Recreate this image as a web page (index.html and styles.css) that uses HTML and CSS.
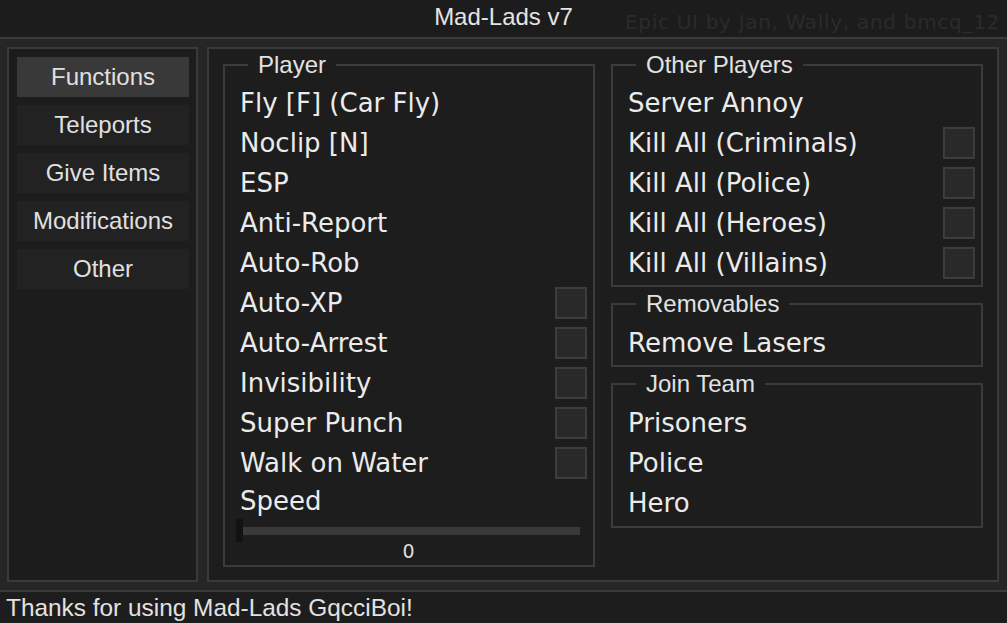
FILE: index.html
```html
<!DOCTYPE html>
<html>
<head>
<meta charset="utf-8">
<link rel="stylesheet" href="styles.css">
</head>
<body>
<div class="window">
  <header class="titlebar">
    <div></div>
    <div class="title">Mad-Lads v7</div>
    <div class="watermark">Epic UI by Jan, Wally, and bmcq_12</div>
  </header>
  <main class="main">
    <nav class="sidebar">
      <div class="tab active">Functions</div>
      <div class="tab">Teleports</div>
      <div class="tab">Give Items</div>
      <div class="tab">Modifications</div>
      <div class="tab">Other</div>
    </nav>
    <section class="content">
      <div class="col">
        <fieldset class="group player">
          <legend>Player</legend>
          <div class="row"><span>Fly [F] (Car Fly)</span></div>
          <div class="row"><span>Noclip [N]</span></div>
          <div class="row"><span>ESP</span></div>
          <div class="row"><span>Anti-Report</span></div>
          <div class="row"><span>Auto-Rob</span></div>
          <div class="row"><span>Auto-XP</span><span class="check"></span></div>
          <div class="row"><span>Auto-Arrest</span><span class="check"></span></div>
          <div class="row"><span>Invisibility</span><span class="check"></span></div>
          <div class="row"><span>Super Punch</span><span class="check"></span></div>
          <div class="row"><span>Walk on Water</span><span class="check"></span></div>
          <div class="speed-label">Speed</div>
          <div class="slider"><div class="track"></div><div class="thumb"></div></div>
          <div class="value">0</div>
        </fieldset>
      </div>
      <div class="col right">
        <fieldset class="group others">
          <legend>Other Players</legend>
          <div class="row"><span>Server Annoy</span></div>
          <div class="row"><span>Kill All (Criminals)</span><span class="check"></span></div>
          <div class="row"><span>Kill All (Police)</span><span class="check"></span></div>
          <div class="row"><span>Kill All (Heroes)</span><span class="check"></span></div>
          <div class="row"><span>Kill All (Villains)</span><span class="check"></span></div>
        </fieldset>
        <fieldset class="group removables">
          <legend>Removables</legend>
          <div class="row"><span>Remove Lasers</span></div>
        </fieldset>
        <fieldset class="group team">
          <legend>Join Team</legend>
          <div class="row"><span>Prisoners</span></div>
          <div class="row"><span>Police</span></div>
          <div class="row"><span>Hero</span></div>
        </fieldset>
      </div>
    </section>
  </main>
  <footer class="status">Thanks for using Mad-Lads GqcciBoi!</footer>
</div>
</body>
</html>
```
FILE: styles.css
```css
* { box-sizing: border-box; }
html, body { margin: 0; padding: 0; }
body {
  width: 1007px;
  height: 623px;
  overflow: hidden;
  background: #262626;
  font-family: "Liberation Sans", Arial, sans-serif;
  color: #e2e2e2;
}
.window { width: 1007px; height: 623px; display: flex; flex-direction: column; }

.titlebar {
  height: 39px;
  background: #1c1c1c;
  border-bottom: 2px solid #3a3a3a;
  display: grid;
  grid-template-columns: 1fr auto 1fr;
  align-items: start;
}
.title {
  font-size: 24px;
  padding-top: 3px;
  color: #e4e4e4;
  white-space: nowrap;
}
.watermark {
  justify-self: end;
  padding-top: 10px;
  padding-right: 7px;
  font-family: "DejaVu Sans", sans-serif;
  font-size: 20px;
  letter-spacing: 0.7px;
  color: #2b2b2b;
  white-space: nowrap;
}

.main {
  height: 553px;
  padding: 8px 8px 8px 7px;
  display: flex;
  gap: 9px;
  border-bottom: 2px solid #3a3a3a;
}
.sidebar {
  width: 191px;
  border: 2px solid #3a3a3a;
  background: #1c1c1c;
  padding: 8px 7px 8px 8px;
  display: flex;
  flex-direction: column;
  gap: 8px;
}
.tab {
  height: 40px;
  background: #222222;
  font-size: 24px;
  line-height: 40px;
  text-align: center;
  color: #e0e0e0;
}
.tab.active { background: #393939; }

.content {
  width: 792px;
  border: 2px solid #3a3a3a;
  background: #1d1d1d;
  padding: 2px 14px 0 14px;
  display: flex;
  gap: 16px;
  align-items: flex-start;
}
.col { width: 372px; display: flex; flex-direction: column; }
.col.right { gap: 3px; }

.group {
  margin: 0;
  min-width: 0;
  border: 2px solid #3b3b3b;
  padding: 4px 6px 2px 15px;
}
.group legend {
  margin-left: 8px;
  padding: 0 10px;
  font-family: "Liberation Sans", Arial, sans-serif;
  font-size: 24px;
  line-height: 28px;
  color: #e2e2e2;
}
.removables { padding-top: 5px; padding-bottom: 2px; }
.team { padding-top: 5px; padding-bottom: 3px; }

.row {
  height: 40px;
  display: flex;
  align-items: center;
  justify-content: space-between;
  font-family: "DejaVu Sans", sans-serif;
  font-size: 26px;
  line-height: 40px;
  color: #ebebeb;
  white-space: nowrap;
}
.check {
  width: 32px;
  height: 32px;
  border: 2px solid #3d3d3d;
  background: #292929;
}

.speed-label {
  height: 36px;
  font-family: "DejaVu Sans", sans-serif;
  font-size: 26px;
  line-height: 36px;
  color: #ebebeb;
}
.slider {
  position: relative;
  height: 23px;
  margin: 0 7px 0 -4px;
  display: flex;
  align-items: center;
}
.track {
  flex: 1;
  height: 8px;
  margin-left: 1px;
  background: #3a3a3a;
}
.thumb {
  position: absolute;
  left: 0;
  top: 0;
  width: 7px;
  height: 23px;
  background: #121212;
}
.value {
  height: 18px;
  margin-bottom: 3px;
  padding-right: 10px;
  text-align: center;
  font-family: "DejaVu Sans", sans-serif;
  font-size: 19px;
  line-height: 18px;
  color: #dedede;
}

.status {
  flex: 1;
  background: #1d1d1d;
  font-size: 24.4px;
  line-height: 31px;
  padding-left: 6px;
  color: #e2e2e2;
  white-space: nowrap;
}
```
